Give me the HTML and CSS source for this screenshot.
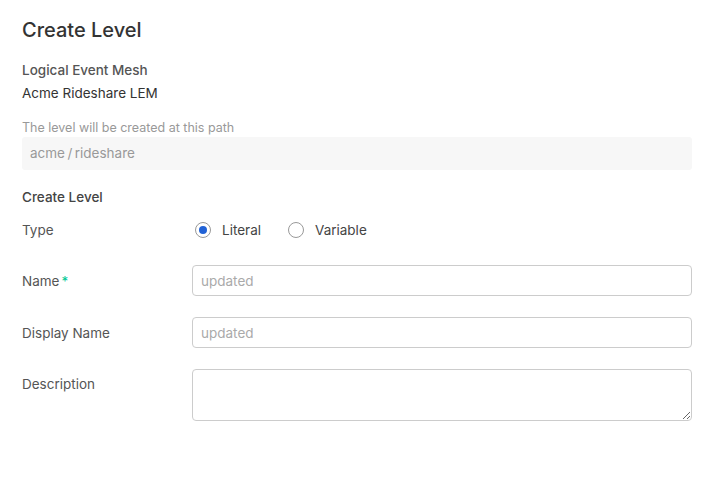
FILE: index.html
```html
<!DOCTYPE html>
<html>
<head>
<meta charset="utf-8">
<link rel="stylesheet" href="styles.css">
</head>
<body>
<div class="page">
  <h1 class="title">Create Level</h1>
  <div class="info-label">Logical Event Mesh</div>
  <div class="info-value">Acme Rideshare LEM</div>
  <div class="path-hint">The level will be created at this path</div>
  <div class="path-box">acme&thinsp;/&thinsp;rideshare</div>
  <div class="section-title">Create Level</div>
  <div class="form">
    <div class="row row-type">
      <div class="label">Type</div>
      <div class="radios">
        <label class="radio"><span class="radio-circle checked"></span><span class="radio-text">Literal</span></label>
        <label class="radio"><span class="radio-circle"></span><span class="radio-text">Variable</span></label>
      </div>
    </div>
    <div class="row row-input">
      <div class="label">Name<span class="req">*</span></div>
      <input class="input" type="text" placeholder="updated">
    </div>
    <div class="row row-input">
      <div class="label">Display Name</div>
      <input class="input" type="text" placeholder="updated">
    </div>
    <div class="row row-textarea">
      <div class="label">Description</div>
      <textarea class="textarea"></textarea>
    </div>
  </div>
</div>
</body>
</html>
```
FILE: styles.css
```css
* { box-sizing: border-box; }
html, body { margin: 0; padding: 0; background: #fff; }
body {
  font-family: Inter, "Open Sans", sans-serif;
  color: #333;
}
.page {
  padding: 18px 20px 0 22px;
}
.title {
  margin: 0;
  font-size: 20px;
  line-height: 24px;
  font-weight: 500;
  color: #333;
}
.info-label {
  margin-top: 19px;
  font-size: 13.5px;
  line-height: 18px;
  font-weight: 500;
  color: #555;
}
.info-value {
  margin-top: 5px;
  font-size: 13.5px;
  line-height: 18px;
  color: #333;
}
.path-hint {
  margin-top: 18px;
  font-size: 12.5px;
  line-height: 16px;
  color: #999;
}
.path-box {
  margin-top: 1px;
  height: 33px;
  background: #f7f7f7;
  border-radius: 3px;
  padding: 0 8px;
  font-size: 13.5px;
  line-height: 33px;
  color: #999;
}
.section-title {
  margin-top: 18px;
  font-size: 13.5px;
  line-height: 18px;
  font-weight: 500;
  color: #444;
}
.form {
  margin-top: 14px;
  display: flex;
  flex-direction: column;
}
.row {
  display: grid;
  grid-template-columns: 170px 1fr;
  align-items: center;
}
.label {
  font-size: 13.5px;
  line-height: 18px;
  color: #555;
}
.req { color: #00c895; margin-left: 2px; }
.row-type { height: 20px; }
.row-input { margin-top: 25px; }
.row-input + .row-input { margin-top: 21px; }
.row-textarea { margin-top: 21px; align-items: start; }
.row-textarea .label { margin-top: 6px; }
.radios {
  display: flex;
  align-items: center;
  padding-left: 3px;
}
.radio {
  display: flex;
  align-items: center;
  margin-right: 27px;
}
.radio-circle {
  width: 16px;
  height: 16px;
  border-radius: 50%;
  border: 1px solid #999;
  background: #fff;
  display: flex;
  align-items: center;
  justify-content: center;
}
.radio-circle.checked::after {
  content: "";
  width: 8px;
  height: 8px;
  border-radius: 50%;
  background: #2162d6;
}
.radio-text {
  margin-left: 11px;
  font-size: 13.5px;
  color: #444;
}
.input, .textarea {
  width: 100%;
  border: 1px solid #ccc;
  border-radius: 4px;
  font-family: inherit;
  font-size: 13.5px;
  color: #333;
  padding: 0 8px;
  margin: 0;
  outline: none;
}
.input { height: 31px; }
.input::placeholder { color: #aaa; }
.textarea { height: 52px; resize: vertical; display: block; }
```
